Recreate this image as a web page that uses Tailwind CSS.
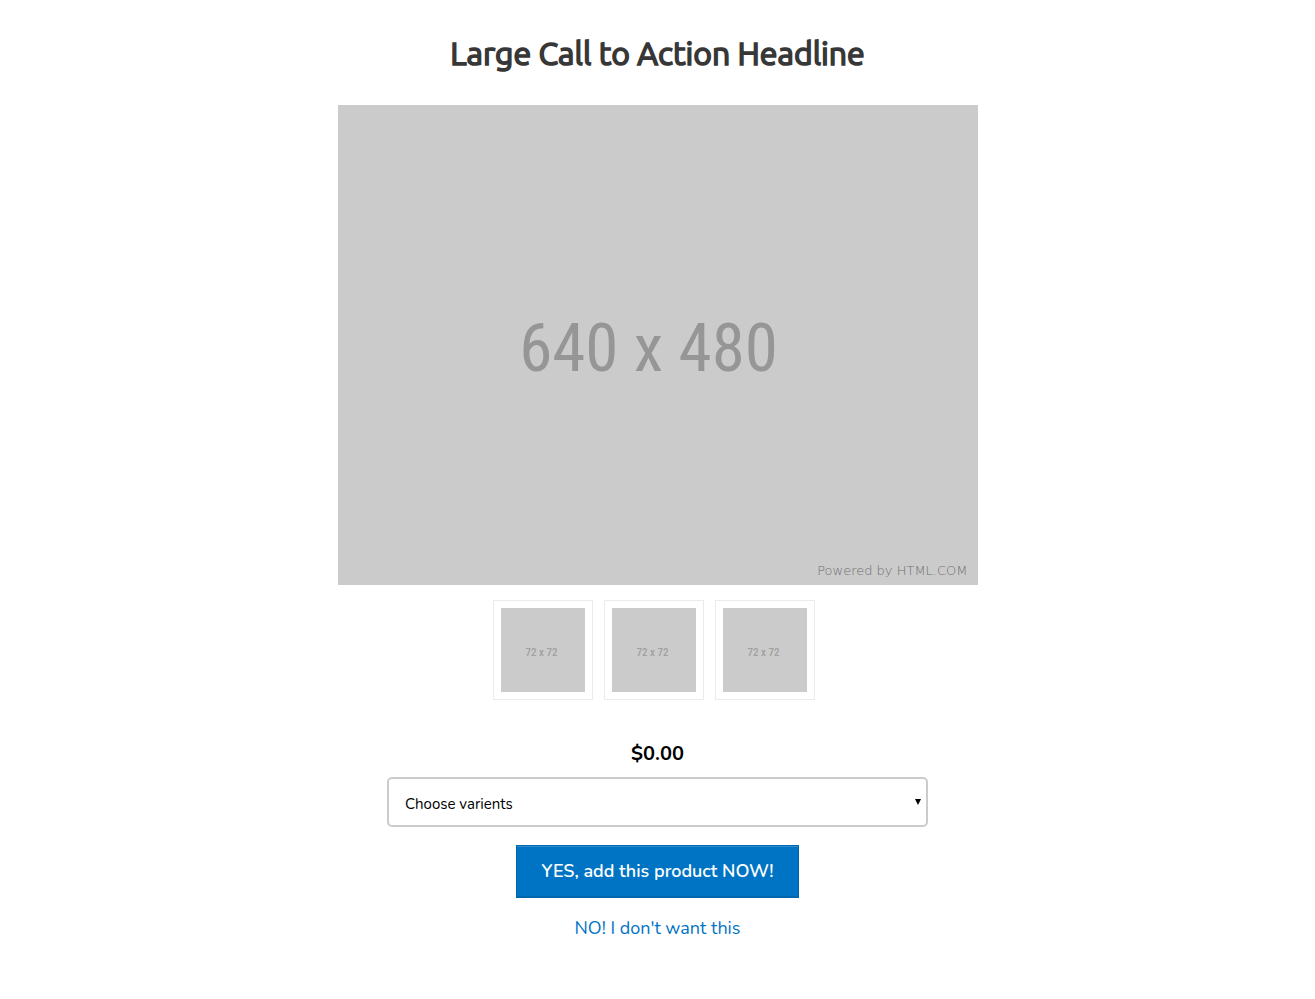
<!DOCTYPE html>
<html lang="en">
<head>
<meta charset="utf-8">
<meta name="viewport" content="width=device-width, initial-scale=1">
<title>Large Call to Action Headline</title>
<script src="https://cdn.jsdelivr.net/npm/@tailwindcss/browser@4"></script>
</head>
<body class="bg-white font-['Nunito','Lato',sans-serif] text-black">
<main class="mx-auto flex max-w-[640px] flex-col items-center pt-8 pb-12">
  <h1 class="text-center font-['Ubuntu','Noto_Sans',sans-serif] text-[32px] leading-[43px] font-normal text-[#373737] [-webkit-text-stroke:0.05em_#373737]">Large Call to Action Headline</h1>

  <div role="img" aria-label="640 x 480 placeholder" class="mt-[30px] flex aspect-4/3 w-full flex-col bg-[#cbcbcb] text-[#969696]">
    <div class="flex flex-1 items-center justify-center pt-7 pr-[18px] font-['Roboto_Condensed','Liberation_Sans',sans-serif] text-[67px] leading-none">640 x 480</div>
    <div class="pr-2.5 pb-1.5 text-right font-['DejaVu_Sans',sans-serif] text-[13px] leading-4 font-extralight text-[#707070]">Powered by HTML.COM</div>
  </div>

  <div class="mt-[15px] mr-[7px] flex gap-[11px]">
    <button type="button" class="size-[100px] border border-[#ebebeb] p-[7px]"><span class="flex size-full items-center justify-center bg-[#cbcbcb] pt-1 pr-[3px] font-['Roboto_Condensed','Liberation_Sans',sans-serif] text-[11px] leading-none font-medium text-[#a0a0a0]">72 x 72</span></button>
    <button type="button" class="size-[100px] border border-[#ebebeb] p-[7px]"><span class="flex size-full items-center justify-center bg-[#cbcbcb] pt-1 pr-[3px] font-['Roboto_Condensed','Liberation_Sans',sans-serif] text-[11px] leading-none font-medium text-[#a0a0a0]">72 x 72</span></button>
    <button type="button" class="size-[100px] border border-[#ebebeb] p-[7px]"><span class="flex size-full items-center justify-center bg-[#cbcbcb] pt-1 pr-[3px] font-['Roboto_Condensed','Liberation_Sans',sans-serif] text-[11px] leading-none font-medium text-[#a0a0a0]">72 x 72</span></button>
  </div>

  <p class="mt-10 text-xl leading-7 font-bold">$0.00</p>

  <div class="relative mt-[9px] w-full max-w-[541px]">
    <select aria-label="Choose varients" class="block h-[50px] w-full appearance-none rounded-[5px] border-2 border-[#cbcbcb] bg-white pt-1 pr-8 pl-4 text-[15px]">
      <option>Choose varients</option>
    </select>
    <svg class="pointer-events-none absolute top-[22px] right-[7px] h-[6px] w-[6px]" viewBox="0 0 6 6" aria-hidden="true"><path d="M0 0H6L3 6Z" fill="#000"/></svg>
  </div>

  <button type="button" class="mt-[18px] h-[53px] border border-[#0266ab] bg-[#0074c4] px-[25px] pb-0.5 text-lg font-semibold text-white shadow-[inset_0_1px_0_#2b8ccf,inset_0_-1px_0_#0266ab]">YES, add this product NOW!</button>

  <a href="#" class="mt-4 text-lg leading-7 text-[#0074c4]">NO! I don't want this</a>
</main>
</body>
</html>
